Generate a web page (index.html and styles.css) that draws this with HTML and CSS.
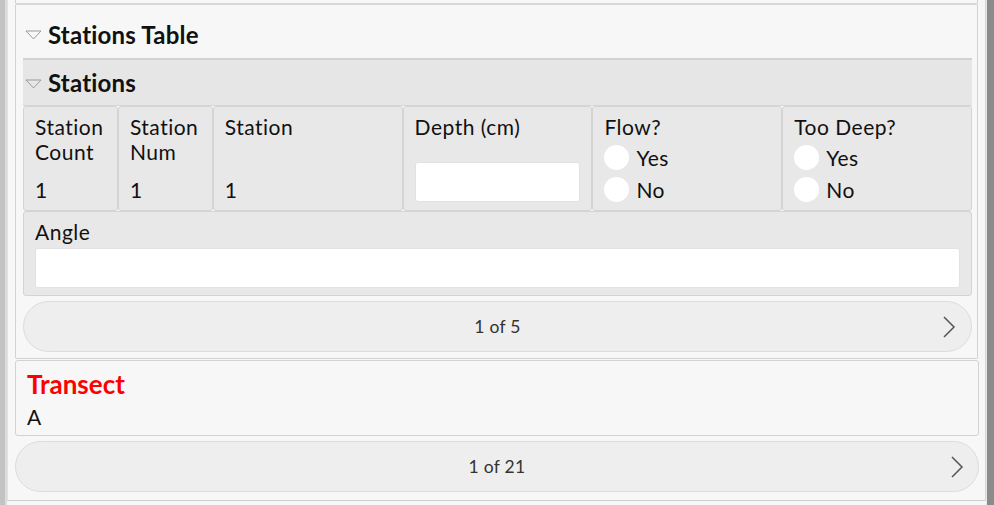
FILE: index.html
```html
<!DOCTYPE html>
<html>
<head>
<meta charset="utf-8">
<link rel="stylesheet" href="styles.css">
</head>
<body>
<div class="lstrip"></div>
<div class="lstrip2"></div>
<div class="frame">
  <div class="prev"></div>
  <div class="card">
    <div class="sec-head">
      <svg class="tri" width="17" height="10" viewBox="0 0 17 10"><polygon points="1,1 16,1 8.5,9" fill="none" stroke="#9a9a9a" stroke-width="1"/></svg>
      <span class="sec-title">Stations Table</span>
    </div>
    <div class="group">
      <div class="group-head">
        <svg class="tri" width="17" height="10" viewBox="0 0 17 10"><polygon points="1,1 16,1 8.5,9" fill="none" stroke="#9a9a9a" stroke-width="1"/></svg>
        <span class="sec-title">Stations</span>
      </div>
      <div class="row">
        <div class="cell"><div class="label">Station Count</div><div class="val">1</div></div>
        <div class="cell"><div class="label">Station Num</div><div class="val">1</div></div>
        <div class="cell"><div class="label">Station</div><div class="val">1</div></div>
        <div class="cell"><div class="label">Depth (cm)</div><div class="input"></div></div>
        <div class="cell">
          <div class="label">Flow?</div>
          <div class="radios">
            <div class="radio"><span class="dot"></span><span>Yes</span></div>
            <div class="radio"><span class="dot"></span><span>No</span></div>
          </div>
        </div>
        <div class="cell">
          <div class="label">Too Deep?</div>
          <div class="radios">
            <div class="radio"><span class="dot"></span><span>Yes</span></div>
            <div class="radio"><span class="dot"></span><span>No</span></div>
          </div>
        </div>
      </div>
      <div class="cell wide"><div class="label">Angle</div><div class="input"></div></div>
    </div>
    <div class="pager inner">
      <span class="pg-text">1 of 5</span>
      <svg class="chev" width="14" height="22" viewBox="0 0 14 22"><polyline points="2,1 12,11 2,21" fill="none" stroke="#555" stroke-width="1.5"/></svg>
    </div>
  </div>
  <div class="tcard">
    <div class="t-title">Transect</div>
    <div class="t-val">A</div>
  </div>
  <div class="pager outer">
    <span class="pg-text">1 of 21</span>
    <svg class="chev" width="14" height="22" viewBox="0 0 14 22"><polyline points="2,1 12,11 2,21" fill="none" stroke="#555" stroke-width="1.5"/></svg>
  </div>
</div>
<div class="rstrip"></div>
</body>
</html>
```
FILE: styles.css
```css
* { box-sizing: border-box; }
html, body { margin: 0; padding: 0; }
body {
  width: 994px;
  height: 505px;
  overflow: hidden;
  display: flex;
  background: #f6f7f6;
  font-family: Lato, "Noto Sans", sans-serif;
  color: #111;
}
.lstrip { width: 5px; background: #c3c3c3; flex: none; }
.lstrip2 { width: 2px; background: #dcdcdc; flex: none; }
.frame {
  width: 979px;
  flex: none;
  height: 501px;
  background: #f6f7f6;
  border-left: 1px solid #e2e2e2;
  border-right: 1px solid #d6d6d6;
  border-bottom: 1px solid #d0d0d0;
  padding: 0 7px 6px 7px;
  display: flex;
  flex-direction: column;
}
.rstrip { width: 8px; flex: none; background: #8b8b8b; border-left: 1px solid #e8e8e8; }
.prev {
  height: 3px;
  border-left: 1px solid #d2d2d2;
  border-right: 1px solid #d2d2d2;
}
.card {
  border: 1px solid #d2d2d2;
  border-top: 2px solid #d6d6d6;
  border-radius: 2px;
  background: #f6f7f6;
  padding: 0 5px 6px 7px;
}
.sec-head {
  height: 53px;
  display: flex;
  align-items: center;
  padding-left: 2px;
  padding-top: 5px;
}
.tri { flex: none; margin-right: 6px; margin-top: 2px; }
.sec-title {
  font-weight: 700;
  font-size: 24px;
  letter-spacing: 0.2px;
}
.group-head {
  height: 48px;
  background: #e6e6e6;
  border-top: 2px solid #d2d2d2;
  border-bottom: 1px solid #d6d6d6;
  display: flex;
  align-items: center;
  padding-left: 2px;
}
.row {
  display: grid;
  grid-template-columns: 1fr 1fr 2fr 2fr 2fr 2fr;
}
.cell {
  height: 105px;
  background: #e8e8e8;
  border: 1px solid #d4d4d4;
  border-radius: 3px;
  padding: 7px 11px 8px 11px;
  display: flex;
  flex-direction: column;
  font-size: 21px;
  line-height: 25px;
  letter-spacing: 0.5px;
}
.cell.wide { height: 85px; padding-bottom: 7px; }
.val { margin-top: auto; }
.input {
  margin-top: auto;
  height: 40px;
  background: #fff;
  border: 1px solid #e2e2e2;
  border-radius: 3px;
}
.radios {
  margin-top: auto;
  display: flex;
  flex-direction: column;
  gap: 7px;
}
.radio {
  display: flex;
  align-items: center;
  height: 25px;
  gap: 7px;
}
.dot {
  width: 25px;
  height: 25px;
  border-radius: 50%;
  background: #fff;
  flex: none;
}
.pager {
  height: 51px;
  border: 1px solid #dcdcdc;
  border-radius: 26px;
  background: #eeeeee;
  display: flex;
  align-items: center;
  justify-content: center;
  position: relative;
  font-size: 17.5px;
  letter-spacing: 0.3px;
  color: #333;
}
.pager.inner { margin-top: 5px; }
.pager.outer { margin-top: 5px; }
.chev { position: absolute; right: 15px; top: 14px; }
.pager.outer .chev { top: 14px; right: 14px; }
.tcard {
  margin-top: 1px;
  border: 1px solid #d2d2d2;
  border-radius: 3px;
  background: #f6f7f6;
  padding: 9px 11px 6px 11px;
  margin-right: -1px;
}
.pager.outer { margin-right: -1px; }
.t-title {
  color: #ff0000;
  font-weight: 700;
  font-size: 26px;
  line-height: 28px;
}
.t-val {
  margin-top: 6px;
  font-size: 21px;
  line-height: 25px;
}
```
